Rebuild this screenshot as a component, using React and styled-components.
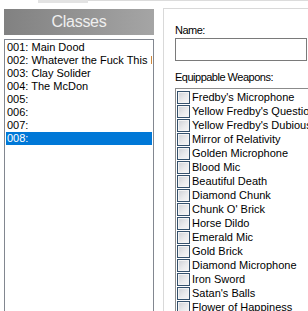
import React from 'react';
import styled, { createGlobalStyle } from 'styled-components';

const GlobalStyle = createGlobalStyle`
  html, body {
    margin: 0;
    padding: 0;
    background: #fff;
    width: 308px;
    height: 311px;
    overflow: hidden;
  }
  * { box-sizing: border-box; }
`;

const Page = styled.div`
  display: flex;
  flex-direction: column;
  width: 308px;
  height: 311px;
  overflow: hidden;
  font-family: "Liberation Sans", Arial, sans-serif;
`;

const TabStrip = styled.div`
  display: flex;
  height: 3px;
  flex: none;
`;

const TabPiece = styled.div`
  width: ${p => (p.$w ? `${p.$w}px` : 'auto')};
  flex: ${p => (p.$w ? 'none' : '1')};
  background: ${p => (p.$gray ? '#e3e3e3' : '#fff')};
  border-top: ${p => (p.$line ? '1px solid #dcdcdc' : 'none')};
`;

const Body = styled.div`
  display: flex;
  align-items: flex-start;
  padding-top: 5px;
`;

const LeftColumn = styled.div`
  display: flex;
  flex-direction: column;
  gap: 4px;
  width: 150px;
  margin: 1px 0 0 4px;
  flex: none;
`;

const Header = styled.div`
  height: 26px;
  display: flex;
  align-items: center;
  justify-content: center;
  background: linear-gradient(to right, #818181, #a5a5a5);
  color: #efefef;
  font-size: 16px;
  letter-spacing: -0.3px;
`;

const ListBox = styled.div`
  height: 290px;
  border: 1px solid #828790;
  padding: 1px;
  background: #fff;
`;

const ListItem = styled.div`
  height: 13px;
  line-height: 13px;
  padding-left: 1px;
  font-size: 11px;
  white-space: nowrap;
  overflow: hidden;
  color: ${p => (p.$selected ? '#fff' : '#000')};
  background: ${p => (p.$selected ? '#0078d7' : 'transparent')};
`;

const Panel = styled.div`
  flex: none;
  width: 170px;
  height: 320px;
  margin-left: 9px;
  border-top: 1px solid #d9d9d9;
  border-left: 1px solid #d9d9d9;
  padding: 14px 0 0 11px;
  background: #fff;
  display: flex;
  flex-direction: column;
`;

const Label = styled.div`
  height: 14px;
  line-height: 14px;
  font-size: 11px;
  letter-spacing: -0.5px;
  color: #000;
  margin: ${p => p.$margin || '0'};
`;

const TextBox = styled.div`
  width: 132px;
  height: 23px;
  border: 1px solid #7a7a7a;
  background: #fff;
  margin-top: 1px;
`;

const CheckList = styled.div`
  width: 160px;
  height: 240px;
  margin-top: 4px;
  border: 1px solid #8b8b8b;
  padding: 1px;
  background: #fff;
`;

const CheckRow = styled.div`
  height: 14px;
  display: flex;
  align-items: center;
  gap: 2px;
  font-size: 11px;
  white-space: nowrap;
  color: #000;
`;

const Box = styled.span`
  flex: none;
  width: 13px;
  height: 13px;
  border: 1px solid #33506c;
  background: linear-gradient(135deg, #cdd0d5 0%, #e9eaec 55%, #f7f7f7 100%);
  box-shadow: inset 0 0 0 1px #f4f4f4;
`;

const classes = [
  '001: Main Dood',
  '002: Whatever the Fuck This Is',
  '003: Clay Solider',
  '004: The McDon',
  '005:',
  '006:',
  '007:',
  '008:',
];

const weapons = [
  "Fredby's Microphone",
  "Yellow Fredby's Question Mark",
  "Yellow Fredby's Dubious Mic",
  'Mirror of Relativity',
  'Golden Microphone',
  'Blood Mic',
  'Beautiful Death',
  'Diamond Chunk',
  "Chunk O' Brick",
  'Horse Dildo',
  'Emerald Mic',
  'Gold Brick',
  'Diamond Microphone',
  'Iron Sword',
  "Satan's Balls",
  'Flower of Happiness',
];

export default function App() {
  return (
    <Page>
      <GlobalStyle />
      <TabStrip>
        <TabPiece $w={38} />
        <TabPiece $w={50} $gray />
        <TabPiece $line />
      </TabStrip>
      <Body>
        <LeftColumn>
          <Header>Classes</Header>
          <ListBox>
            {classes.map((c, i) => (
              <ListItem key={c} $selected={i === 7}>{c}</ListItem>
            ))}
          </ListBox>
        </LeftColumn>
        <Panel>
          <Label>Name:</Label>
          <TextBox />
          <Label $margin="9px 0 0 0">Equippable Weapons:</Label>
          <CheckList>
            {weapons.map(w => (
              <CheckRow key={w}>
                <Box />
                <span>{w}</span>
              </CheckRow>
            ))}
          </CheckList>
        </Panel>
      </Body>
    </Page>
  );
}
